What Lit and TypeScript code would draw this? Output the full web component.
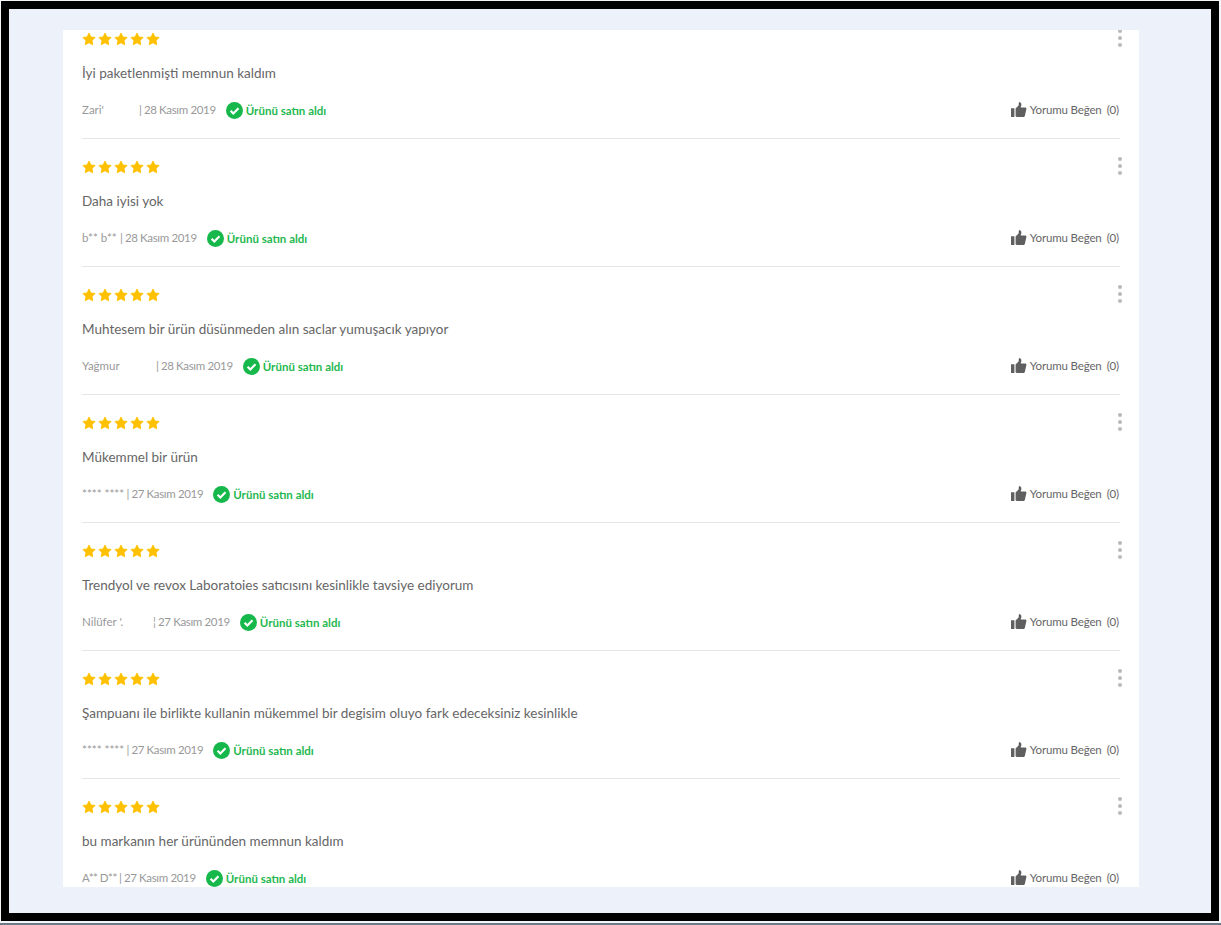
import { LitElement, html, css } from "lit";
import { customElement } from "lit/decorators.js";
import { classMap } from "lit/directives/class-map.js";

const STAR = "M8 1.2l2.1 4.5 4.9.6-3.6 3.4.9 4.9L8 12.2l-4.3 2.4.9-4.9L1 6.3l4.9-.6z";
const THUMB = "M0 6.2h3.4V15H0zM4.6 6.4 7.6 3.4 8 0c1.5 0 2.4 1 2.4 2.4 0 1-.4 2-.7 3.2h4.4c.9 0 1.5.7 1.3 1.5l-1.5 6.6c-.2.8-.8 1.3-1.6 1.3H5.8c-.7 0-1.2-.5-1.2-1.2z";

interface Review { text: string; name: string; nameW: number; sep?: string; tight?: boolean; date: string; }
const reviews: Review[] = [
  { text: "İyi paketlenmişti memnun kaldım", name: "Zari'", nameW: 54, date: "28 Kasım 2019" },
  { text: "Daha iyisi yok", name: "b** b**", nameW: 35, date: "28 Kasım 2019" },
  { text: "Muhtesem bir ürün düsünmeden alın saclar yumuşacık yapıyor", name: "Yağmur", nameW: 71, date: "28 Kasım 2019" },
  { text: "Mükemmel bir ürün", name: "**** ****", nameW: 41.5, date: "27 Kasım 2019" },
  { text: "Trendyol ve revox Laboratoies satıcısını kesinlikle tavsiye ediyorum", name: "Nilüfer '.", nameW: 68, sep: "¦", date: "27 Kasım 2019" },
  { text: "Şampuanı ile birlikte kullanin mükemmel bir degisim oluyo fark edeceksiniz kesinlikle", name: "**** ****", nameW: 41.5, date: "27 Kasım 2019" },
  { text: "bu markanın her ürününden memnun kaldım", name: "A** D**", nameW: 34, tight: true, date: "27 Kasım 2019" },
];

@customElement("app-root")
export class AppRoot extends LitElement {
  static styles = css`
    :host { display: block; width: 1221px; height: 925px; overflow: hidden; background: #f4f6fa; font-family: "Lato", "Noto Sans", sans-serif; position: relative; }
    .frame { box-sizing: border-box; width: 1218px; height: 920px; margin: 1px 0 0 1px; border: 8px solid #000; background: #edf1f9; padding: 21px 0 0 54px; }
    .strip { height: 2px; margin-top: 2px; background: #6c7a89; }
    .card { width: 1076px; height: 857px; background: #fff; overflow: hidden; }
    .list { margin-top: -19px; padding: 0 19px; }
    .row { box-sizing: border-box; height: 128px; border-bottom: 1px solid #e6e6e6; position: relative; display: flex; flex-direction: column; }
    .stars { display: flex; margin-top: 21px; height: 14px; }
    .stars svg { width: 14px; height: 14px; fill: #ffc000; margin-right: 2px; }
    .dots { position: absolute; right: -2px; top: 18px; width: 4px; display: flex; flex-direction: column; gap: 3px; }
    .dots i { width: 4px; height: 4px; border-radius: 50%; background: #b9b9b9; }
    .text { margin-top: 18px; font-size: 13.5px; line-height: 18px; color: #666; white-space: nowrap; }
    .meta { margin-top: 18px; height: 20px; display: flex; align-items: center; font-size: 11.5px; color: #999; white-space: nowrap; }
    .name, .sep, .date, .label { padding-bottom: 2px; }
    .name { display: inline-block; }
    .tight { letter-spacing: -0.5px; }
    .sep { margin: 0 2px 0 3px; }
    .date { letter-spacing: -0.35px; }
    .check { width: 17px; height: 17px; margin: 0 3px 0 10px; flex: none; }
    .bought { color: #1fb84f; font-weight: 700; }
    .like { margin-left: auto; padding-right: 1px; display: flex; align-items: center; color: #666; }
    .like svg { width: 16px; height: 15px; fill: #5f5f5f; margin-right: 3px; margin-top: -2px; }
    .label { letter-spacing: -0.15px; }
    .count { margin-left: 5px; }
  `;

  render() {
    return html`<div class="frame"><div class="card"><div class="list">
      ${reviews.map((r) => html`<div class="row">
        <div class="stars">${[0, 1, 2, 3, 4].map(() => html`<svg viewBox="0 0 16 16"><path d=${STAR} stroke="#ffc000" stroke-linejoin="round"></path></svg>`)}</div>
        <div class="dots"><i></i><i></i><i></i></div>
        <div class="text">${r.text}</div>
        <div class="meta">
          <span class=${classMap({ name: true, tight: !!r.tight })} style=${`width:${r.nameW}px`}>${r.name}</span><span class="sep">${r.sep ?? "|"}</span><span class="date">${r.date}</span>
          <svg class="check" viewBox="0 0 17 17"><circle cx="8.5" cy="8.5" r="8.5" fill="#17b84b"></circle><path d="M4.6 8.8l2.7 2.7 5.2-5.2" fill="none" stroke="#fff" stroke-width="2.2"></path></svg>
          <span class="bought">Ürünü satın aldı</span>
          <span class="like"><svg viewBox="0 0 16 15"><path d=${THUMB}></path></svg><span class="label">Yorumu Beğen</span><span class="label count">(0)</span></span>
        </div>
      </div>`)}
    </div></div></div><div class="strip"></div>`;
  }
}
